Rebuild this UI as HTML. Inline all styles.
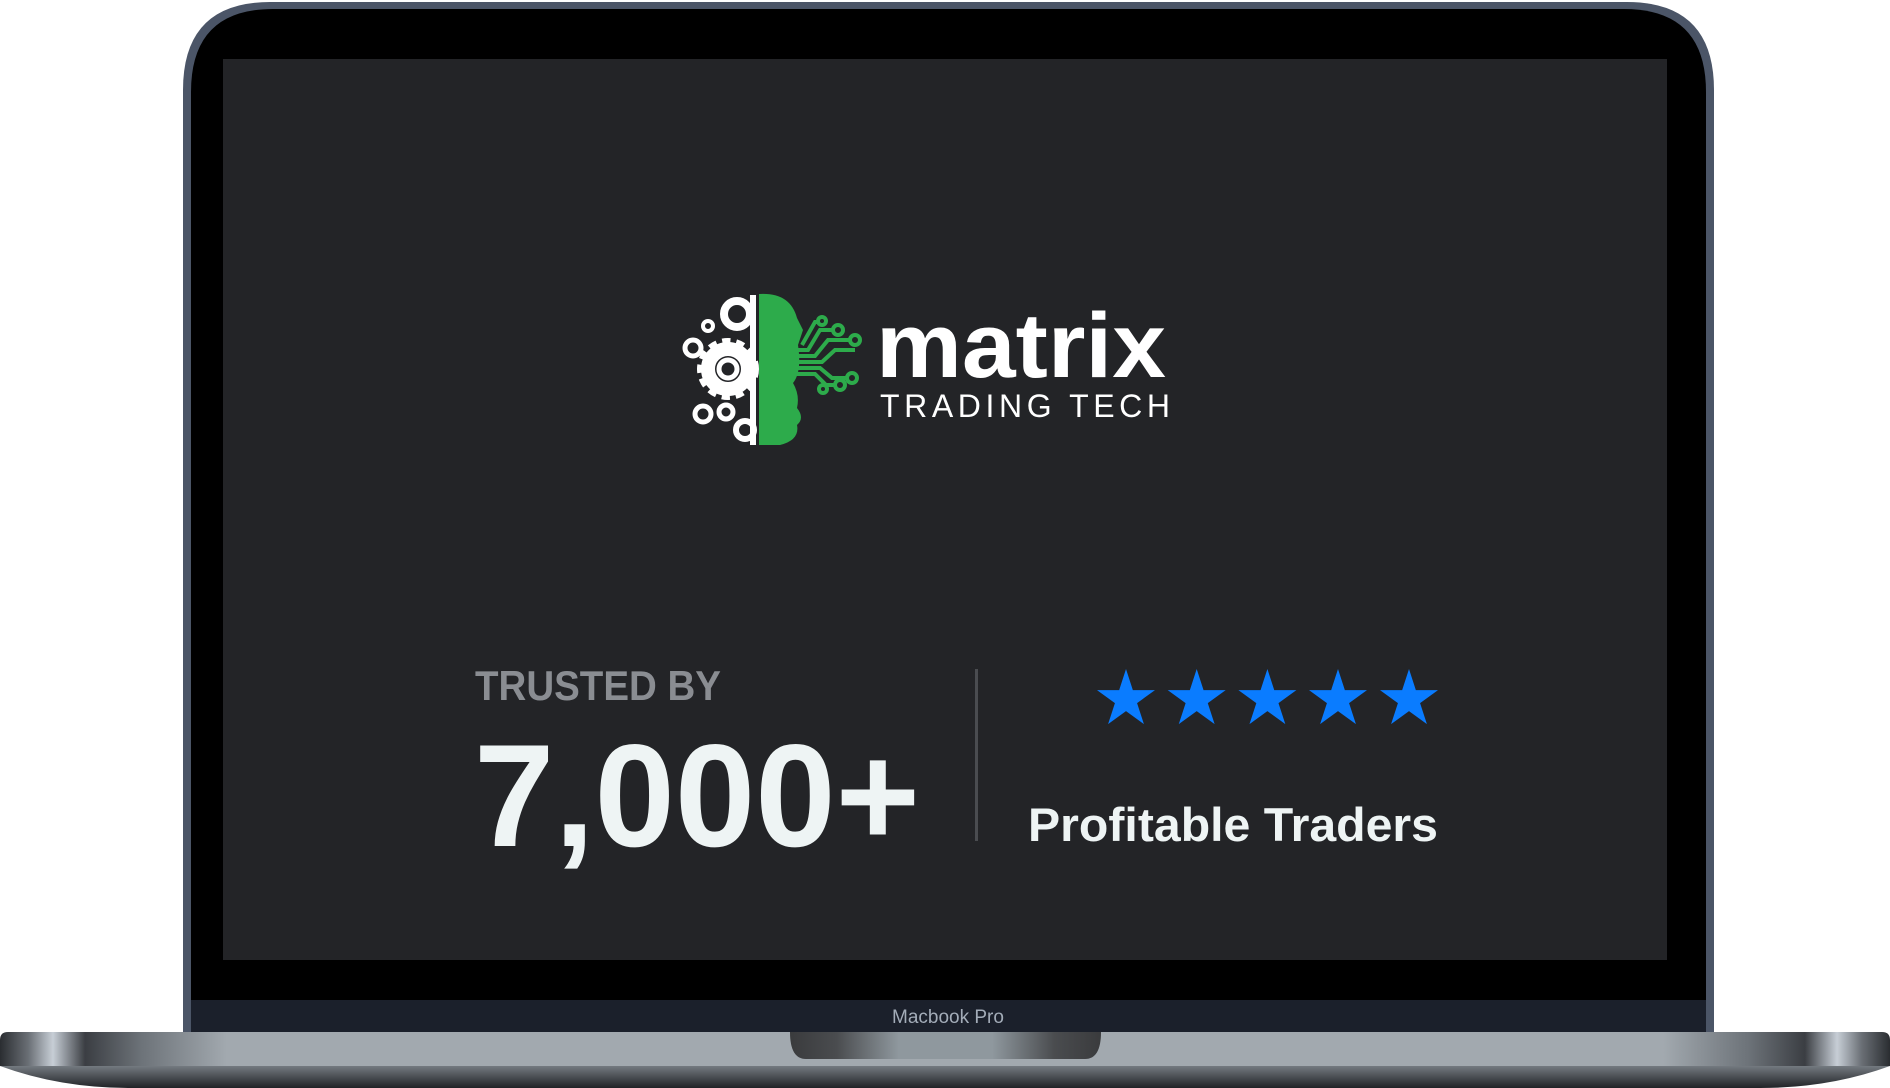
<!DOCTYPE html>
<html><head><meta charset="utf-8"><style>
html,body{margin:0;padding:0;width:1890px;height:1088px;overflow:hidden;background:#fff}
svg{display:block}
</style></head><body>
<svg width="1890" height="1088" viewBox="0 0 1890 1088" xmlns="http://www.w3.org/2000/svg">
<defs>
<linearGradient id="base" x1="0" x2="1" y1="0" y2="0">
<stop offset="0" stop-color="#2a2d31"/><stop offset="0.015" stop-color="#6a6f75"/><stop offset="0.028" stop-color="#c7ced6"/><stop offset="0.045" stop-color="#3b3e43"/><stop offset="0.075" stop-color="#6d7379"/><stop offset="0.12" stop-color="#a2a9af"/><stop offset="0.88" stop-color="#a2a9af"/><stop offset="0.925" stop-color="#6d7379"/><stop offset="0.955" stop-color="#3b3e43"/><stop offset="0.972" stop-color="#c7ced6"/><stop offset="0.985" stop-color="#6a6f75"/><stop offset="1" stop-color="#2a2d31"/>
</linearGradient>
<linearGradient id="bot" x1="0" x2="0" y1="0" y2="1">
<stop offset="0" stop-color="#747a80"/><stop offset="1" stop-color="#202226"/>
</linearGradient>
<linearGradient id="notch" x1="0" x2="1">
<stop offset="0" stop-color="#3a3b3d"/><stop offset="0.15" stop-color="#4a4c4f"/><stop offset="0.35" stop-color="#8f989e"/><stop offset="0.65" stop-color="#8f989e"/><stop offset="0.85" stop-color="#4a4c4f"/><stop offset="1" stop-color="#3a3b3d"/>
</linearGradient>
</defs>
<path d="M183,1033 V90 Q183,2 270,2 H1627 Q1714,2 1714,90 V1033 Z" fill="#4b5567"/>
<path d="M191,1030 V92 Q191,9 273,9 H1624 Q1706,9 1706,92 V1030 Z" fill="#000"/>
<rect x="191" y="1000" width="1515" height="33" fill="#1b202b"/>
<text x="948" y="1023" text-anchor="middle" font-family="Liberation Sans, sans-serif" font-size="19" fill="#a3acb8">Macbook Pro</text>
<rect x="223" y="59" width="1444" height="901" fill="#232427"/>
<path d="M0,1040 Q0,1032 8,1032 H1882 Q1890,1032 1890,1040 V1066 H0 Z" fill="url(#base)"/>
<path d="M0,1066 H1890 Q1830,1088 1760,1088 H130 Q60,1088 0,1066 Z" fill="url(#bot)"/>
<path d="M790,1032 H1101 Q1101,1059 1085,1059 H806 Q790,1059 790,1032 Z" fill="url(#notch)"/>
<g fill="none" stroke="#fff">
<circle cx="728" cy="369" r="24" stroke-width="14" stroke-dasharray="7 5"/>
<circle cx="728" cy="369" r="20" stroke-width="14"/>
<circle cx="728" cy="369" r="9" stroke-width="5"/>
<circle cx="737" cy="314" r="13" stroke-width="8"/>
<circle cx="708" cy="326" r="5" stroke-width="4"/>
<circle cx="693" cy="348" r="8" stroke-width="5"/>
<circle cx="703" cy="414" r="8" stroke-width="5"/>
<circle cx="726" cy="412" r="7" stroke-width="5"/>
<circle cx="745" cy="430" r="9" stroke-width="6"/>
</g>
<rect x="750" y="295" width="6" height="150" fill="#fff"/>
<path d="M759,294 Q790,292 797,318 L803,330 L798,345 Q802,372 793,383 Q800,395 797,408 Q805,418 797,425 Q800,440 780,445 L759,445 Z" fill="#2dab4b"/>
<g stroke="#2dab4b" stroke-width="4" fill="none">
<path d="M790,350 H808 L820,330 H835"/><path d="M790,356 H815 L828,340 H850"/><path d="M795,362 H822 L835,350 H855"/><path d="M790,368 H820 L832,378 H850"/><path d="M795,374 H815 L826,385 H838"/><path d="M802,345 L815,322 H820"/>
</g>
<g fill="#232427" stroke="#2dab4b" stroke-width="4">
<circle cx="838" cy="330" r="5"/><circle cx="855" cy="340" r="5"/><circle cx="822" cy="321" r="4"/><circle cx="852" cy="378" r="5"/><circle cx="840" cy="385" r="5"/><circle cx="823" cy="389" r="4"/>
</g>
<text x="876" y="377" font-family="Liberation Sans, sans-serif" font-weight="bold" font-size="92" fill="#fff" textLength="290" lengthAdjust="spacingAndGlyphs">matrix</text>
<text x="880" y="417" font-family="Liberation Sans, sans-serif" font-size="32" fill="#fff" textLength="296" lengthAdjust="spacing" letter-spacing="6">TRADING TECH</text>
<text x="475" y="700" font-family="Liberation Sans, sans-serif" font-weight="bold" font-size="42" fill="#8a8d92" textLength="246" lengthAdjust="spacingAndGlyphs">TRUSTED BY</text>
<text x="474" y="846" font-family="Liberation Sans, sans-serif" font-weight="bold" font-size="146" fill="#eef4f4" textLength="446" lengthAdjust="spacingAndGlyphs">7,000+</text>
<rect x="975" y="669" width="3" height="172" fill="#4a4c50"/>
<g fill="#0a7cff">
<path transform="translate(1126,699.5)" d="M0,-30.5 L6.85,-9.43 L29,-9.42 L11.08,3.6 L17.93,24.68 L0,11.65 L-17.93,24.68 L-11.08,3.6 L-29,-9.42 L-6.85,-9.43Z"/>
<path transform="translate(1196.7,699.5)" d="M0,-30.5 L6.85,-9.43 L29,-9.42 L11.08,3.6 L17.93,24.68 L0,11.65 L-17.93,24.68 L-11.08,3.6 L-29,-9.42 L-6.85,-9.43Z"/>
<path transform="translate(1267.4,699.5)" d="M0,-30.5 L6.85,-9.43 L29,-9.42 L11.08,3.6 L17.93,24.68 L0,11.65 L-17.93,24.68 L-11.08,3.6 L-29,-9.42 L-6.85,-9.43Z"/>
<path transform="translate(1338,699.5)" d="M0,-30.5 L6.85,-9.43 L29,-9.42 L11.08,3.6 L17.93,24.68 L0,11.65 L-17.93,24.68 L-11.08,3.6 L-29,-9.42 L-6.85,-9.43Z"/>
<path transform="translate(1409,699.5)" d="M0,-30.5 L6.85,-9.43 L29,-9.42 L11.08,3.6 L17.93,24.68 L0,11.65 L-17.93,24.68 L-11.08,3.6 L-29,-9.42 L-6.85,-9.43Z"/>
</g>
<text x="1028" y="841" font-family="Liberation Sans, sans-serif" font-weight="bold" font-size="47" fill="#eef4f4" textLength="410" lengthAdjust="spacingAndGlyphs">Profitable Traders</text>
</svg>
</body></html>
